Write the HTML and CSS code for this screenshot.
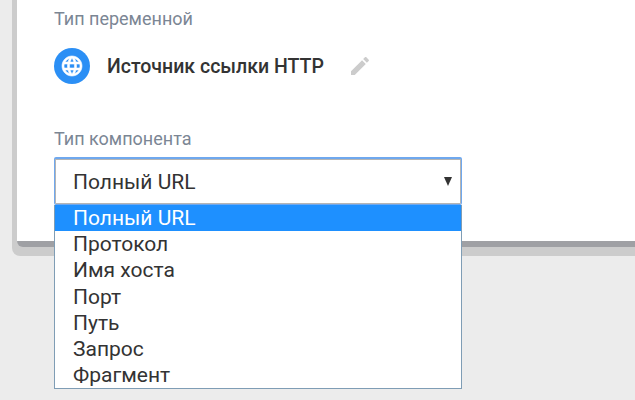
FILE: index.html
```html
<!DOCTYPE html>
<html lang="ru">
<head>
    <meta charset="UTF-8">
    <meta name="viewport" content="width=device-width, initial-scale=1.0">
    <title>Тип переменной</title>
    <link rel="stylesheet" href="styles.css">
</head>
<body>
    <div class="card-shadow">
        <div class="card">
            <div class="field-label">Тип переменной</div>
            <div class="var-type">
                <span class="type-icon">
                    <svg width="24" height="24" viewBox="0 0 24 24">
                        <path fill="#fff" stroke="#fff" stroke-width="0.6" d="M11.99 2C6.47 2 2 6.48 2 12s4.47 10 9.99 10C17.52 22 22 17.52 22 12S17.52 2 11.99 2zm6.93 6h-2.95c-.32-1.25-.78-2.45-1.38-3.56 1.84.63 3.37 1.91 4.33 3.56zM12 4.04c.83 1.2 1.48 2.53 1.91 3.96h-3.82c.43-1.43 1.08-2.76 1.91-3.96zM4.26 14C4.1 13.36 4 12.69 4 12s.1-1.36.26-2h3.38c-.08.66-.14 1.32-.14 2 0 .68.06 1.34.14 2H4.26zm.82 2h2.95c.32 1.25.78 2.45 1.38 3.56-1.84-.63-3.37-1.9-4.33-3.56zm2.95-8H5.08c.96-1.66 2.49-2.93 4.33-3.56C8.81 5.55 8.35 6.75 8.03 8zM12 19.96c-.83-1.2-1.48-2.53-1.91-3.96h3.82c-.43 1.43-1.08 2.76-1.91 3.96zM14.34 14H9.66c-.09-.66-.16-1.32-.16-2 0-.68.07-1.35.16-2h4.68c.09.65.16 1.32.16 2 0 .68-.07 1.34-.16 2zm.25 5.56c.6-1.11 1.06-2.31 1.38-3.56h2.95c-.96 1.65-2.49 2.93-4.33 3.56zM16.36 14c.08-.66.14-1.32.14-2 0-.68-.06-1.34-.14-2h3.38c.16.64.26 1.31.26 2s-.1 1.36-.26 2h-3.38z"/>
                    </svg>
                </span>
                <span class="type-name">Источник ссылки HTTP</span>
                <svg class="edit-icon" width="24" height="24" viewBox="0 0 24 24">
                    <path fill="#ccc" d="M3 17.25V21h3.75L17.81 9.94l-3.75-3.75L3 17.25zM20.71 7.04c.39-.39.39-1.02 0-1.41l-2.34-2.34c-.39-.39-1.02-.39-1.41 0l-1.83 1.83 3.75 3.75 1.83-1.83z"/>
                </svg>
            </div>
            <div class="field-label component-label">Тип компонента</div>
            <div class="select-wrap">
                <div class="select-box">
                    <span>Полный URL</span>
                    <span class="select-arrow"></span>
                </div>
                <ul class="select-list">
                    <li class="selected">Полный URL</li>
                    <li>Протокол</li>
                    <li>Имя хоста</li>
                    <li>Порт</li>
                    <li>Путь</li>
                    <li>Запрос</li>
                    <li>Фрагмент</li>
                </ul>
            </div>
        </div>
    </div>
</body>
</html>
```

FILE: styles.css
```css
html, body {
    height: 100%;
}
body {
    margin: 0;
    background-color: #ececec;
    font-family: Roboto, "Liberation Sans", sans-serif;
    overflow: hidden;
}
.card-shadow {
    margin-left: 12px;
    padding: 0 0 9px 5px;
    background-color: #ccc;
    border-bottom-left-radius: 8px;
}
.card {
    height: 241px;
    padding: 0 0 0 37px;
    background-color: #fff;
    border-bottom: 6px solid #9fa0a4;
    border-bottom-left-radius: 6px;
}
.field-label {
    padding-top: 8px;
    font-size: 18px;
    line-height: 21px;
    color: #7b8694;
}
.var-type {
    display: flex;
    align-items: center;
    margin-top: 19px;
    height: 36px;
}
.type-icon {
    display: flex;
    align-items: center;
    justify-content: center;
    width: 36px;
    height: 36px;
    border-radius: 50%;
    background-color: #2b8ff5;
}
.type-name {
    margin-left: 17px;
    font-size: 19.5px;
    font-weight: 500;
    color: #333;
}
.edit-icon {
    margin-left: 24px;
}
.component-label {
    margin-top: 44px;
    padding-top: 0;
}
.select-wrap {
    position: relative;
    width: 408px;
    margin-top: 8px;
}
.select-box {
    display: flex;
    align-items: center;
    justify-content: space-between;
    box-sizing: border-box;
    height: 48px;
    padding: 0 9px 0 18px;
    background-color: #fff;
    border: 1px solid #6fa8ee;
    border-top-width: 2px;
    box-shadow: inset 0 0 0 1px #b5b5b5;
    border-radius: 2px;
    font-size: 21px;
    color: #333;
}
.select-arrow {
    width: 0;
    height: 0;
    border-left: 4.5px solid transparent;
    border-right: 4.5px solid transparent;
    border-top: 9px solid #333;
}
.select-list {
    position: absolute;
    top: 48px;
    left: 0;
    right: 0;
    margin: 0;
    padding: 0;
    list-style: none;
    background-color: #fff;
    border: 1px solid #7f9db5;
    border-top: 0;
    font-size: 21px;
    line-height: 26.2px;
    color: #333;
}
.select-list li {
    padding-left: 18px;
}
.select-list .selected {
    background-color: #1e90ff;
    color: #fff;
}
```
